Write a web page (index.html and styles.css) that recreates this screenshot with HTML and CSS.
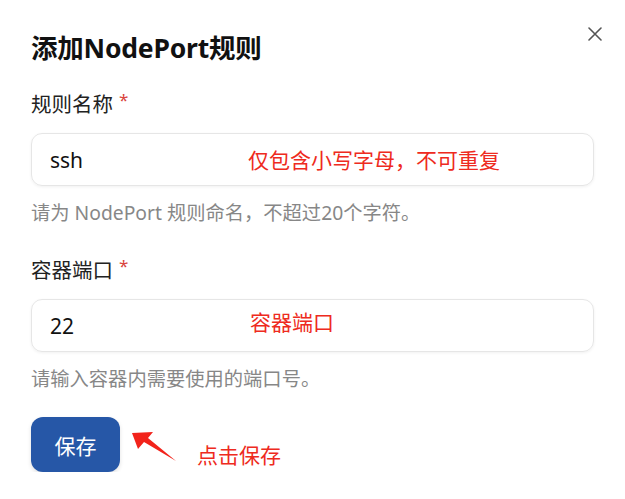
FILE: index.html
```html
<!DOCTYPE html>
<html lang="zh-CN">
<head>
<meta charset="utf-8">
<title>添加NodePort规则</title>
<link rel="stylesheet" href="styles.css">
</head>
<body>
<div class="dialog">
  <div class="header">
    <h1 class="title">添加NodePort规则</h1>
    <button class="close" aria-label="关闭">
      <svg width="14" height="14" viewBox="0 0 14 14"><path d="M1 1 L13 13 M13 1 L1 13" stroke="#555" stroke-width="1.6" stroke-linecap="round" fill="none"/></svg>
    </button>
  </div>

  <div class="field first">
    <div class="label">规则名称<span class="req">*</span></div>
    <div class="input">
      <span class="value">ssh</span>
      <span class="note note-name">仅包含小写字母，不可重复</span>
    </div>
    <div class="help">请为 NodePort 规则命名，不超过20个字符。</div>
  </div>

  <div class="field">
    <div class="label">容器端口<span class="req">*</span></div>
    <div class="input">
      <span class="value">22</span>
      <span class="note note-port">容器端口</span>
    </div>
    <div class="help">请输入容器内需要使用的端口号。</div>
  </div>

  <div class="actions">
    <button class="save">保存</button>
    <svg class="arrow" width="60" height="55" viewBox="0 0 60 55">
      <polygon points="8,16 29,15 24,21 52,44 20,25 14,32" fill="#f2231b"/>
    </svg>
    <span class="note-save">点击保存</span>
  </div>
</div>
</body>
</html>
```

FILE: styles.css
```css
html, body {
  margin: 0;
  padding: 0;
  background: #ffffff;
}

body {
  font-family: "Noto Sans", "Noto Sans CJK SC", sans-serif;
  color: #1f1f1f;
}

.dialog {
  width: 625px;
  box-sizing: border-box;
  padding: 31px 31px 0 31px;
}

.header {
  display: flex;
  justify-content: space-between;
  align-items: flex-start;
}

.title {
  margin: 0;
  font-size: 26.5px;
  line-height: 34px;
  font-weight: 700;
  color: #111111;
  letter-spacing: -0.2px;
}

.close {
  border: 0;
  background: transparent;
  padding: 0;
  width: 14px;
  height: 14px;
  margin-top: -4px;
  margin-right: -8px;
  display: flex;
}

.field {
  margin-top: 30px;
}

.field.first {
  margin-top: 25px;
}

.label {
  font-size: 20.5px;
  line-height: 28px;
  color: #222222;
  display: flex;
  align-items: flex-start;
}

.req {
  color: #d9443c;
  font-size: 17px;
  line-height: 20px;
  margin-left: 6px;
}

.input {
  position: relative;
  margin-top: 15px;
  height: 53px;
  box-sizing: border-box;
  border: 1px solid #e6e6e6;
  border-radius: 11px;
  box-shadow: 0 1px 3px rgba(0, 0, 0, 0.06);
  display: flex;
  align-items: center;
  padding-left: 18px;
}

.value {
  font-size: 21px;
  color: #111111;
}

.note {
  position: absolute;
  top: 50%;
  color: #ee2a20;
  font-size: 21px;
  line-height: 28px;
  margin-top: -14px;
}

.note-name {
  left: 216px;
}

.note-port {
  left: 218px;
  margin-top: -18px;
}

.help {
  margin-top: 14px;
  font-size: 19.3px;
  line-height: 26px;
  color: #878787;
}

.actions {
  margin-top: 25px;
  display: flex;
  align-items: flex-start;
}

.save {
  width: 89px;
  height: 55px;
  border: 0;
  border-radius: 12px;
  background: #2657a7;
  color: #ffffff;
  font-family: "Noto Sans", "Noto Sans CJK SC", sans-serif;
  font-size: 21px;
  padding: 0;
  box-shadow: 0 2px 4px rgba(0, 0, 0, 0.12);
}

.arrow {
  margin-left: 4px;
  display: block;
}

.note-save {
  margin-left: 13px;
  margin-top: 24px;
  font-size: 21px;
  line-height: 28px;
  color: #ee2a20;
}
```
